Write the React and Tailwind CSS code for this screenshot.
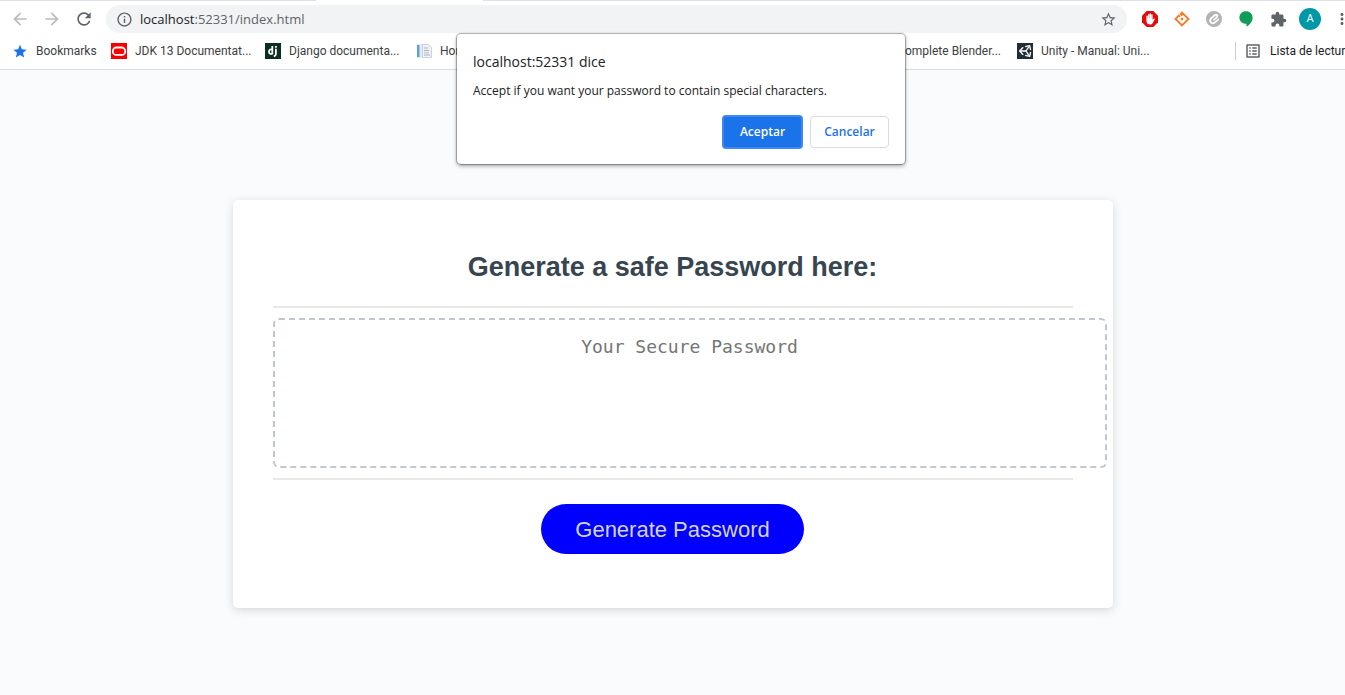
import {
  MdArrowBack,
  MdArrowForward,
  MdRefresh,
  MdInfoOutline,
  MdStarBorder,
  MdStar,
  MdExtension,
  MdMoreVert,
  MdListAlt,
} from "react-icons/md";

function OracleIcon() {
  return (
    <svg viewBox="0 0 16 16" className="size-4 shrink-0" aria-hidden="true">
      <rect width="16" height="16" fill="#f80000" />
      <rect x="1.800" y="4.500" width="12.400" height="7.400" rx="3.500" fill="none" stroke="#fff" strokeWidth="1.800" />
    </svg>
  );
}

function DjangoIcon() {
  return (
    <svg viewBox="0 0 16 16" className="size-4 shrink-0" aria-hidden="true">
      <rect width="16" height="16" fill="#0c2f23" />
      <g fill="none" stroke="#fff" strokeWidth="1.8">
        <path d="M7.3 3v8.3" />
        <path d="M7.3 6.5C5.2 5.8 4 7 4 8.7s1.200 2.600 3.300 2.100" />
        <path d="M10.900 5.800v5.200c0 1.400-.6 2-2.100 2.400" />
        <path d="M10.900 3v1.700" />
      </g>
    </svg>
  );
}

function DocumentIcon() {
  return (
    <svg viewBox="0 0 16 16" className="size-4 shrink-0" aria-hidden="true">
      <path d="M1 1h9v14H1z" fill="#e4eaf2" />
      <path d="M1 2h2.500v12H1z" fill="#5aa2dc" />
      <path d="M6.500 1.500h6l3 3v10h-9z" fill="#f1f2f6" stroke="#c3c8d2" strokeWidth=".8" />
      <path d="M8 5h4M8 7.500h5M8 12h6" stroke="#a9b0bf" strokeWidth="1" />
      <path d="M8 9h5v1.500H8z" fill="#c9cedb" />
    </svg>
  );
}

function UnityIcon() {
  return (
    <svg viewBox="0 0 16 16" className="size-4 shrink-0" aria-hidden="true">
      <rect width="16" height="16" fill="#222c37" />
      <g fill="none" stroke="#fff" strokeWidth="1.300" strokeLinejoin="round">
        <path d="M6.200 4.300 2.600 8l3.600 3.700" />
        <path d="M8.200 3.700 12.700 2.600 13.600 7M13.600 9 12.700 13.400 8.200 12.300" />
        <path d="M3.500 8H9L11.900 3.600M9 8l2.900 4.400" />
      </g>
    </svg>
  );
}

function AdblockIcon() {
  return (
    <svg viewBox="0 0 16 16" className="size-4" aria-hidden="true">
      <path d="M4.700 0h6.600L16 4.700v6.600L11.300 16H4.700L0 11.300V4.700z" fill="#e40d0d" />
      <path
        d="M4.400 9.500V5.300a.7.7 0 0 1 1.400 0V7.500h.2V3.700a.7.7 0 0 1 1.400 0V7.300h.2V3a.7.7 0 0 1 1.400 0V7.300h.2V4a.7.7 0 0 1 1.400 0v5l1-1.200c.6-.6 1.400-.1 1 .6l-1.900 3.600c-.6 1.100-1.300 1.500-2.600 1.500C5.700 13.500 4.400 12 4.400 9.500z"
        fill="#fff"
      />
    </svg>
  );
}

function DiamondIcon() {
  return (
    <svg viewBox="0 0 16 16" className="size-4" aria-hidden="true">
      <path d="M6.200 5.500 4.700 4.700 1.500 8 8 14.500 14.500 8 8 1.500 6.600 2.900 8.400 4.700" fill="none" stroke="#fb7a24" strokeWidth="1.900" />
      <path d="M8 6.200 9.800 8 8 9.800 6.200 8z" fill="#fb7a24" />
    </svg>
  );
}

function ClipIcon() {
  return (
    <svg viewBox="0 0 16 16" className="size-4" aria-hidden="true">
      <circle cx="8" cy="8" r="8" fill="#b3b3b3" />
      <path
        d="M8 8.800 11.200 5.800c1-1.500-.8-2.900-2.200-1.800L5 7.500c-2.300 2.500.6 6 3.400 4.300 1.600-1 2.800-2 3.900-3.300"
        fill="none"
        stroke="#fff"
        strokeWidth="1.800"
        strokeLinecap="round"
      />
    </svg>
  );
}

function BalloonIcon() {
  return (
    <svg viewBox="0 0 16 16" className="size-4" aria-hidden="true">
      <path d="M8 .2c3.800 0 6.600 2.700 6.600 6.200 0 3.900-2.700 7.300-6.100 9.400v-3.100C4.400 12.900 1.400 10 1.400 6.400 1.400 2.900 4.200.2 8 .2z" fill="#0f9d58" />
    </svg>
  );
}

const extensions = [
  { name: "Ad blocker", icon: <AdblockIcon /> },
  { name: "Diamond", icon: <DiamondIcon /> },
  { name: "Clip", icon: <ClipIcon /> },
  { name: "Hangouts", icon: <BalloonIcon /> },
  { name: "Extensions", icon: <MdExtension size={17} /> },
];

function Bookmark({ icon, className, children }) {
  return (
    <a href="#" className={`flex shrink-0 items-center gap-2 whitespace-nowrap ${className}`}>
      {icon}
      <span>{children}</span>
    </a>
  );
}

function Toolbar() {
  return (
    <div className="flex h-9 items-center pr-[11px] text-[#5f6368]">
      <button aria-label="Back" className="ml-2.5 text-[#babcbe]">
        <MdArrowBack size={20} />
      </button>
      <button aria-label="Forward" className="ml-3 text-[#babcbe]">
        <MdArrowForward size={20} />
      </button>
      <button aria-label="Reload" className="ml-3">
        <MdRefresh size={20} />
      </button>
      <div className="ml-3 flex h-7 grow items-center rounded-full bg-[#f1f3f4] px-2.5">
        <MdInfoOutline size={17} className="shrink-0" />
        <label htmlFor="address" className="ml-[7px] text-[13px] leading-5">
          <span className="text-[#202124]">localhost</span>:52331/index.html
        </label>
        <input id="address" className="min-w-0 grow bg-transparent outline-none" />
        <button aria-label="Bookmark this page">
          <MdStarBorder size={17} />
        </button>
      </div>
      <div className="ml-3.5 flex items-center gap-3.5">
        {extensions.map((e) => (
          <button key={e.name} aria-label={e.name} className="flex w-[18px] justify-center">
            {e.icon}
          </button>
        ))}
      </div>
      <button className="ml-3 size-[22px] rounded-full bg-[#0097a7] font-['Roboto',sans-serif] text-[11px] text-white">
        A
      </button>
      <button aria-label="Menu" className="ml-3">
        <MdMoreVert size={18} />
      </button>
    </div>
  );
}

function BookmarksBar() {
  return (
    <nav className="flex h-8 items-center pb-1 pl-3 font-['Roboto',sans-serif] text-[12px] text-[#3c4043]">
      <Bookmark icon={<MdStar size={17} className="w-4 text-[#1a73e8]" />} className="w-[99px]">
        Bookmarks
      </Bookmark>
      <Bookmark icon={<OracleIcon />} className="w-[154px]">
        JDK 13 Documentat...
      </Bookmark>
      <Bookmark icon={<DjangoIcon />} className="w-[151px]">
        Django documenta...
      </Bookmark>
      <Bookmark icon={<DocumentIcon />} className="grow">
        Home
      </Bookmark>
      <Bookmark className="mr-4">Complete Blender...</Bookmark>
      <Bookmark icon={<UnityIcon />} className="w-[218px]">
        Unity - Manual: Uni...
      </Bookmark>
      <Bookmark
        icon={<MdListAlt size={18} className="text-[#5f6368]" />}
        className="w-[127px] border-l border-[#c8cbcf] pl-2 text-[#202124]"
      >
        Lista de lectura
      </Bookmark>
    </nav>
  );
}

function Dialog() {
  return (
    <div
      role="dialog"
      aria-labelledby="dialog-title"
      className="absolute inset-x-0 top-[34px] mx-auto w-[448px] rounded-[4px] bg-white px-4 pt-4 pb-[15px] text-[#202124] shadow-[0_0_1px_1px_rgba(0,0,0,0.3),0_2px_4px_rgba(0,0,0,0.35)]"
    >
      <h2 id="dialog-title" className="text-[14px] leading-6">
        localhost:52331 dice
      </h2>
      <p className="mt-[7px] text-[12px] leading-5">
        Accept if you want your password to contain special characters.
      </p>
      <div className="mt-3.5 flex items-center justify-end gap-[7px] text-[12px] font-semibold">
        <button className="h-[34px] w-[81px] rounded-[4px] border-2 border-[#4285f4] bg-[#1a73e8] text-white">
          Aceptar
        </button>
        <button className="h-8 w-[79px] rounded-[4px] border border-[#dadce0] text-[#1a73e8]">Cancelar</button>
      </div>
    </div>
  );
}

export default function App() {
  return (
    <div className="flex min-h-screen flex-col overflow-hidden bg-[#fafbfd]">
      <header className="relative w-[calc(100%+17px)] border-b border-[#d9dbdf] bg-white font-['Open_Sans','Noto_Sans',sans-serif]">
        <div className="flex h-px justify-between">
          <div className="w-[316px] bg-[#dee1e6]" />
          <div className="ml-[167px] grow bg-[#dee1e6]" />
        </div>
        <Toolbar />
        <BookmarksBar />
        <Dialog />
      </header>
      <main className="grow px-4 pt-[130px] pb-10 font-['Liberation_Sans',Arial,sans-serif]">
        <section className="mx-auto flex w-full max-w-[880px] flex-col rounded-[5px] bg-white px-10 pt-[47px] pb-[54px] shadow-[0_2px_10px_rgba(0,0,0,0.15)]">
          <h1 className="text-center text-[27px] leading-10 font-bold text-[#374550]">
            <label htmlFor="password">Generate a safe Password here:</label>
          </h1>
          <hr className="mt-[19px] border-t-2 border-[#e8e8e8]" />
          <textarea
            id="password"
            placeholder="Your Secure Password"
            className="my-2.5 h-[150px] w-[calc(100%+34px)] resize-none rounded-[6px] border-2 border-dashed border-[#c1c7d0] p-[15px] text-center font-['DejaVu_Sans_Mono',monospace] text-[18px] leading-6 outline-none placeholder:text-[#757575]"
          />
          <hr className="border-t-2 border-[#e8e8e8]" />
          <button className="mx-auto mt-6 h-[50px] w-[263px] rounded-full bg-[#0000ff] text-[22px] text-[#d3d3d3]">
            Generate Password
          </button>
        </section>
      </main>
    </div>
  );
}
